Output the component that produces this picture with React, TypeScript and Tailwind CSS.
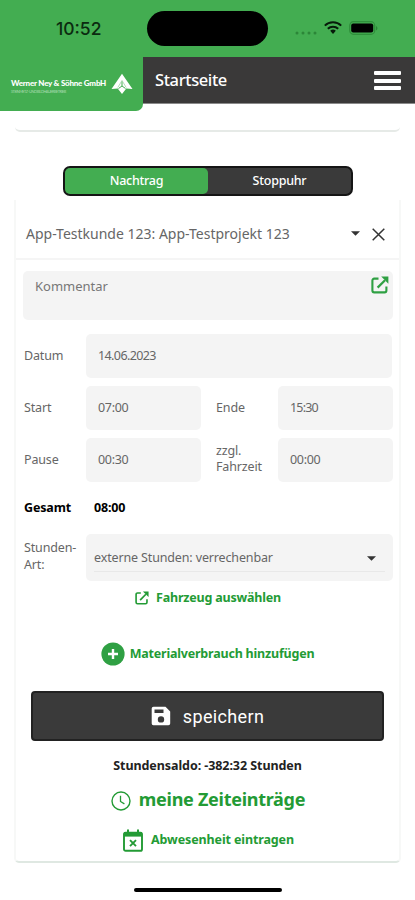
import { useState } from 'react'
import { clsx } from 'clsx'

const ExternalIcon = ({ className }: { className?: string }) => (
  <svg viewBox="0 0 18 18" fill="none" stroke="currentColor" className={className}>
    <path d="M7.5 2.6H3.2A1.8 1.8 0 0 0 1.4 4.4v10.2a1.8 1.8 0 0 0 1.8 1.8h10.4a1.8 1.8 0 0 0 1.8-1.8v-4" strokeWidth="2.1" />
    <path d="M6.6 11.6 14 4.2" strokeWidth="2.2" />
    <path d="M10.2.6h7.2v7.2z" fill="currentColor" stroke="none" />
  </svg>
)

const SaveIcon = () => (
  <svg viewBox="0 0 20 20" className="h-5 w-5 shrink-0">
    <path
      fill="#fff"
      fillRule="evenodd"
      d="M2.5.8h12l4.7 4.7v12a1.8 1.8 0 0 1-1.8 1.8h-15A1.8 1.8 0 0 1 .7 17.5V2.6A1.8 1.8 0 0 1 2.5.8zM3.5 3.6v3.3h9V3.6zM10 10.2a3.2 3.2 0 1 0 0 6.4 3.2 3.2 0 0 0 0-6.4z"
    />
  </svg>
)

const ClockIcon = () => (
  <svg viewBox="0 0 20 20" fill="none" stroke="currentColor" className="mt-[2px] h-5 w-5 shrink-0">
    <circle cx="10" cy="10" r="9" strokeWidth="1.4" />
    <path d="M9.5 4.8v5.7l3.9 2.4" strokeWidth="1.3" />
  </svg>
)

const CalendarIcon = () => (
  <svg viewBox="0 0 20 23" fill="none" stroke="currentColor" className="h-[23px] w-5 shrink-0">
    <rect x="1" y="3.6" width="18" height="18.2" rx="1.6" strokeWidth="1.9" />
    <path d="M1 3h18v4.6H1z" fill="currentColor" stroke="none" />
    <path d="M5 .6v3M15 .6v3" strokeWidth="2" />
    <path d="m7 11.2 6 6M13 11.2l-6 6" strokeWidth="1.9" />
  </svg>
)

const PlusIcon = () => (
  <svg viewBox="0 0 24 24" className="h-6 w-6 shrink-0">
    <circle cx="12" cy="12" r="11.6" fill="#2fa043" />
    <path d="M12 7v10M7 12h10" stroke="#fff" strokeWidth="2.4" />
  </svg>
)

const Caret = () => (
  <svg viewBox="0 0 10 5" className="h-[5px] w-[9px] shrink-0">
    <path d="M0 0h10L5 5z" fill="#333" />
  </svg>
)

const StatusBar = () => (
  <div className="flex h-[57px] bg-[#43ad51]">
    <div className="w-[147px] pt-[17px] pl-[56px] font-[Inter] text-[17.5px] leading-6 font-medium text-[#0b2b10]">
      10:52
    </div>
    <div className="mt-[11px] h-[35px] w-[121px] rounded-full bg-black" />
    <div className="flex flex-1 items-start pl-[27px]">
      <svg viewBox="0 0 22 4" className="mt-[31px] h-1 w-[22px] fill-[#2c8638]">
        <circle cx="2" cy="2" r="1.5" />
        <circle cx="8" cy="2" r="1.5" />
        <circle cx="14" cy="2" r="1.5" />
        <circle cx="20" cy="2" r="1.5" />
      </svg>
      <svg viewBox="0 0 18 13" fill="none" stroke="#071a0a" className="mt-[21px] ml-[7px] h-[13px] w-[18px]">
        <path d="M.8 4.6a11.7 11.7 0 0 1 16.4 0" strokeWidth="2" />
        <path d="M3.8 7.8a7.5 7.5 0 0 1 10.4 0" strokeWidth="2" />
        <path d="m9 13 2.8-3.2a4.2 4.2 0 0 0-5.6 0z" fill="#071a0a" stroke="none" />
      </svg>
      <svg viewBox="0 0 30 14" className="mt-[21px] ml-[7px] h-[14px] w-[30px]">
        <rect x=".7" y=".7" width="25" height="12.6" rx="3.8" fill="none" stroke="#2f8f3b" strokeWidth="1.2" />
        <rect x="2.2" y="2.6" width="22" height="9" rx="2" fill="#000" />
        <path d="M27 5v4.4c2-.8 2-3.6 0-4.4z" fill="#2c8638" />
      </svg>
    </div>
  </div>
)

const Header = () => (
  <header className="flex h-[54px] items-start bg-white">
    <div className="flex h-[54px] w-[143px] items-start rounded-br-[7px] bg-[#43ad51] pl-[11px] text-white">
      <div className="w-[100px] pt-[20px] whitespace-nowrap">
        <div className="font-['Lato'] text-[8px] leading-[12px] font-black tracking-[-0.22px]">Werner Ney &amp; Söhne GmbH</div>
        <div className="font-['Lato'] text-[3.8px] leading-[5px] tracking-[-0.45px] text-[#a9dbb0]">
          STEINMETZ- UND BILDHAUERBETRIEB
        </div>
      </div>
      <svg viewBox="0 0 22 22" className="mt-[16px] h-[22px] w-[22px]">
        <path d="M11 .8 21.5 16l-6.2-.5L11 21l-4.3-5.5-6.2.5z" fill="#fff" />
        <path d="M11 8.5V13M11 13l-3.5 2.5M11 13l3.5 2.5" stroke="#43ad51" strokeWidth="1" fill="none" />
        <path d="M11 7.5 6.8 14.5M11 7.5l4.2 7" stroke="#8fce97" strokeWidth=".7" fill="none" />
      </svg>
    </div>
    <div className="flex h-[47px] flex-1 items-center justify-between border-b border-[#8a8a8a] bg-[#3a3939] pr-[14px] pl-[12px]">
      <h1 className="pb-px text-[16.5px] leading-6 font-medium tracking-[-0.4px] whitespace-nowrap text-white">
        Startseite
      </h1>
      <button className="flex flex-col gap-[3.5px] pt-px">
        <span className="h-1 w-[27px] rounded-[1px] bg-white" />
        <span className="h-1 w-[27px] rounded-[1px] bg-white" />
        <span className="h-1 w-[27px] rounded-[1px] bg-white" />
      </button>
    </div>
  </header>
)

const field = 'flex h-11 items-center rounded-[5px] bg-[#f4f4f4] pl-3 text-[12.5px] tracking-[-0.3px] text-[#666]'
const label = 'pb-[2px] pl-px text-[12.5px] leading-[17px] tracking-[-0.15px] text-[#666]'

export default function App() {
  const [tab, setTab] = useState('Nachtrag')

  return (
    <div className="h-[900px] w-[415px] overflow-hidden bg-white font-['Noto_Sans',sans-serif]">
      <StatusBar />
      <Header />

      <div className="mx-[15px] h-[21px] rounded-b-[5px] border-b-2 border-[#e6eae7]" />

      <div className="mt-[34px] ml-[63px] flex h-[30px] w-[290px] rounded-[7px] border-2 border-[#151515] bg-[#3a3a3a] text-[12.5px] font-medium tracking-[-0.25px] text-white">
        {['Nachtrag', 'Stoppuhr'].map(name => (
          <button
            key={name}
            className={clsx('flex-1 rounded-[5px] pt-px', tab === name && 'bg-[#43ad51]')}
            onClick={() => setTab(name)}
          >
            {name}
          </button>
        ))}
      </div>

      <main className="mx-[14px] mt-1 h-[663px] rounded-b-[5px] border-x-2 border-b-2 border-x-[#f7f8f7] border-b-[#dfe8e2]">
        {/* Project select */}
        <div className="flex h-[60px] items-center border-b-2 border-[#f5f5f5] pt-[9px] pl-[10px] text-[#666]">
          <span className="w-[325px] text-[14px] whitespace-nowrap">App-Testkunde 123: App-Testprojekt 123</span>
          <Caret />
          <svg viewBox="0 0 13 13" className="mt-px ml-[12px] h-[13px] w-[13px]">
            <path d="m.7.7 11.6 11.6M12.3.7.7 12.3" stroke="#333" strokeWidth="1.5" />
          </svg>
        </div>

        <div className="mt-[11px] mr-[6px] ml-[7px]">
          <div className="flex h-[49px] items-start justify-between rounded-[5px] bg-[#f4f4f4] pt-[5px] pr-[4px] pl-3 text-[13px] leading-5 text-[#777]">
            Kommentar
            <ExternalIcon className="h-[18px] w-[18px] text-[#2fa043]" />
          </div>

          {/* Date and times */}
          <div className="mt-[14px] grid grid-cols-[63px_115px_77px_115px] items-center gap-y-2">
            <span className={label}>Datum</span>
            <div className={clsx(field, 'col-span-3 w-[306px] tracking-[-0.6px]')}>14.06.2023</div>
            <span className={label}>Start</span>
            <div className={field}>07:00</div>
            <span className="pb-[2px] pl-[15px] text-[12.5px] leading-[17px] tracking-[-0.15px] text-[#666]">Ende</span>
            <div className={clsx(field, 'tracking-[-0.8px]')}>15:30</div>
            <span className={label}>Pause</span>
            <div className={field}>00:30</div>
            <span className="pb-[3px] pl-[15px] text-[12.5px] leading-[16px] tracking-[-0.15px] text-[#666]">
              zzgl.
              <br />
              Fahrzeit
            </span>
            <div className={field}>00:00</div>
          </div>

          <div className="mt-[16px] flex pl-px text-[12.5px] leading-5 font-bold tracking-[-0.15px] text-black">
            <span className="w-[70px]">Gesamt</span>
            <span>08:00</span>
          </div>

          <div className="mt-[16px] flex">
            <span className={clsx(label, 'w-[63px] pt-[5px]')}>
              Stunden-
              <br />
              Art:
            </span>
            <div className="h-[47px] flex-1 rounded-[5px] bg-[#f4f4f4] px-2">
              <div className="flex h-[38px] items-center justify-between border-b border-[#e8e8e8] pt-[11px] pr-[9px] text-[12.5px] tracking-[-0.14px] text-[#666]">
                externe Stunden: verrechenbar
                <Caret />
              </div>
            </div>
          </div>
        </div>

        {/* Actions */}
        <div className="flex flex-col items-center text-[12.5px] font-bold whitespace-nowrap text-[#239b35]">
          <button className="mt-[7px] flex h-5 items-center gap-[7px] pl-px tracking-[-0.2px]">
            <ExternalIcon className="h-[14px] w-[14px]" />
            Fahrzeug auswählen
          </button>
          <button className="mt-[34px] flex h-6 items-center gap-[5px] tracking-[-0.2px]">
            <PlusIcon />
            Materialverbrauch hinzufügen
          </button>
          <button className="mt-[25px] flex h-[50px] w-[353px] items-center justify-center gap-3 rounded-[4px] border-2 border-[#222] bg-[#3a3a3a] font-[Roboto] text-[18px] font-normal tracking-[0.35px] text-white">
            <SaveIcon />
            speichern
          </button>
          <div className="mt-[15px] leading-5 tracking-[-0.07px] text-[#222]">Stundensaldo: -382:32 Stunden</div>
          <button className="mt-[12px] flex h-6 items-center gap-[8px] pl-px text-[18px] tracking-[-0.28px]">
            <ClockIcon />
            <span className="pb-[2px]">meine Zeiteinträge</span>
          </button>
          <button className="mt-[16px] flex h-6 items-center gap-[8px] pl-[2px] tracking-[-0.12px]">
            <CalendarIcon />
            Abwesenheit eintragen
          </button>
        </div>
      </main>

      <div className="mx-auto mt-[25px] h-1 w-[148px] rounded-full bg-black" />
    </div>
  )
}
